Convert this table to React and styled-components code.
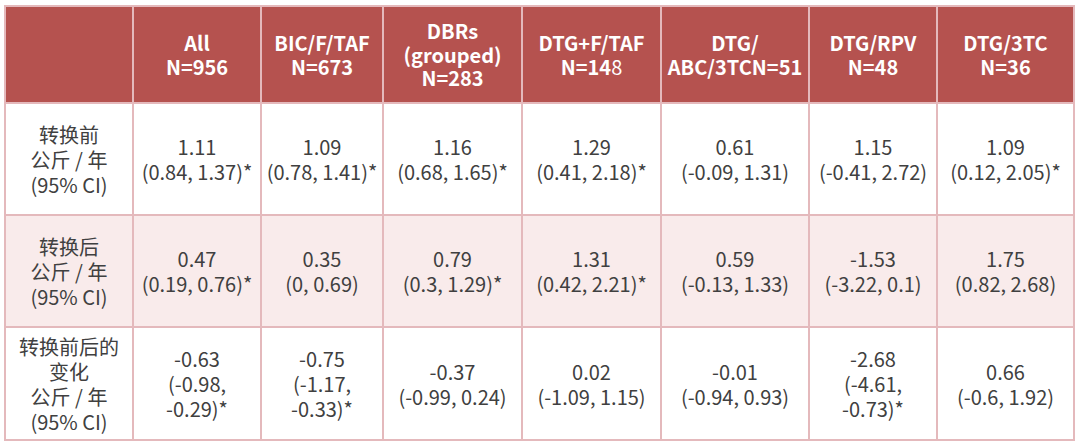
import styled, { createGlobalStyle } from 'styled-components';

const GlobalStyle = createGlobalStyle`
  html, body {
    margin: 0;
    padding: 0;
    background: #ffffff;
  }
  body {
    font-family: "Noto Sans CJK SC", "Noto Sans", sans-serif;
  }
`;

const Page = styled.div`
  padding: 5px 0 0 4px;
`;

const Table = styled.table`
  border-collapse: collapse;
  table-layout: fixed;
  width: 1069px;
  border: 2px solid #e4b9bc;
`;

const HeadCell = styled.th`
  background: #b5524f;
  color: #ffffff;
  font-weight: 700;
  font-size: 20px;
  line-height: 23.5px;
  height: 95px;
  padding: 0 2px;
  text-align: center;
  vertical-align: middle;
  border: 2px solid #e4b9bc;
  border-top: none;
  white-space: nowrap;
`;

const Light = styled.span`
  font-weight: 400;
`;

const Row = styled.tr`
  background: ${(p) => (p.$tinted ? '#f9ebeb' : '#ffffff')};
`;

const Cell = styled.td`
  color: #404040;
  font-size: 20px;
  line-height: 25px;
  font-weight: 400;
  height: ${(p) => p.$h}px;
  padding: 0 2px;
  text-align: center;
  vertical-align: middle;
  border: 2px solid #e4b9bc;
  white-space: nowrap;
`;

const Line = styled.div`
  display: block;
`;

const widths = [128, 128, 122, 139, 139, 148, 128, 137];

const heads = [
  null,
  ['All', 'N=956'],
  ['BIC/F/TAF', 'N=673'],
  ['DBRs', '(grouped)', 'N=283'],
  ['DTG+F/TAF', <>N=14<Light>8</Light></>],
  ['DTG/', 'ABC/3TCN=51'],
  ['DTG/RPV', 'N=48'],
  ['DTG/3TC', 'N=36'],
];

const rows = [
  {
    h: 110,
    label: ['转换前', '公斤 / 年', '(95% CI)'],
    cells: [
      ['1.11', '(0.84, 1.37)*'],
      ['1.09', '(0.78, 1.41)*'],
      ['1.16', '(0.68, 1.65)*'],
      ['1.29', '(0.41, 2.18)*'],
      ['0.61', '(-0.09, 1.31)'],
      ['1.15', '(-0.41, 2.72)'],
      ['1.09', '(0.12, 2.05)*'],
    ],
  },
  {
    h: 110,
    tinted: true,
    label: ['转换后', '公斤 / 年', '(95% CI)'],
    cells: [
      ['0.47', '(0.19, 0.76)*'],
      ['0.35', '(0, 0.69)'],
      ['0.79', '(0.3, 1.29)*'],
      ['1.31', '(0.42, 2.21)*'],
      ['0.59', '(-0.13, 1.33)'],
      ['-1.53', '(-3.22, 0.1)'],
      ['1.75', '(0.82, 2.68)'],
    ],
  },
  {
    h: 111,
    label: ['转换前后的', '变化', '公斤 / 年', '(95% CI)'],
    cells: [
      ['-0.63', '(-0.98,', '-0.29)*'],
      ['-0.75', '(-1.17,', '-0.33)*'],
      ['-0.37', '(-0.99, 0.24)'],
      ['0.02', '(-1.09, 1.15)'],
      ['-0.01', '(-0.94, 0.93)'],
      ['-2.68', '(-4.61,', '-0.73)*'],
      ['0.66', '(-0.6, 1.92)'],
    ],
  },
];

const Lines = ({ lines }) =>
  lines.map((l, i) => <Line key={i}>{l}</Line>);

export default function App() {
  return (
    <>
      <GlobalStyle />
      <Page>
        <Table>
          <colgroup>
            {widths.map((w, i) => (
              <col key={i} style={{ width: w }} />
            ))}
          </colgroup>
          <thead>
            <tr>
              {heads.map((h, i) => (
                <HeadCell key={i}>{h && <Lines lines={h} />}</HeadCell>
              ))}
            </tr>
          </thead>
          <tbody>
            {rows.map((r, i) => (
              <Row key={i} $tinted={r.tinted}>
                <Cell $h={r.h}>
                  <Lines lines={r.label} />
                </Cell>
                {r.cells.map((c, j) => (
                  <Cell key={j} $h={r.h}>
                    <Lines lines={c} />
                  </Cell>
                ))}
              </Row>
            ))}
          </tbody>
        </Table>
      </Page>
    </>
  );
}
